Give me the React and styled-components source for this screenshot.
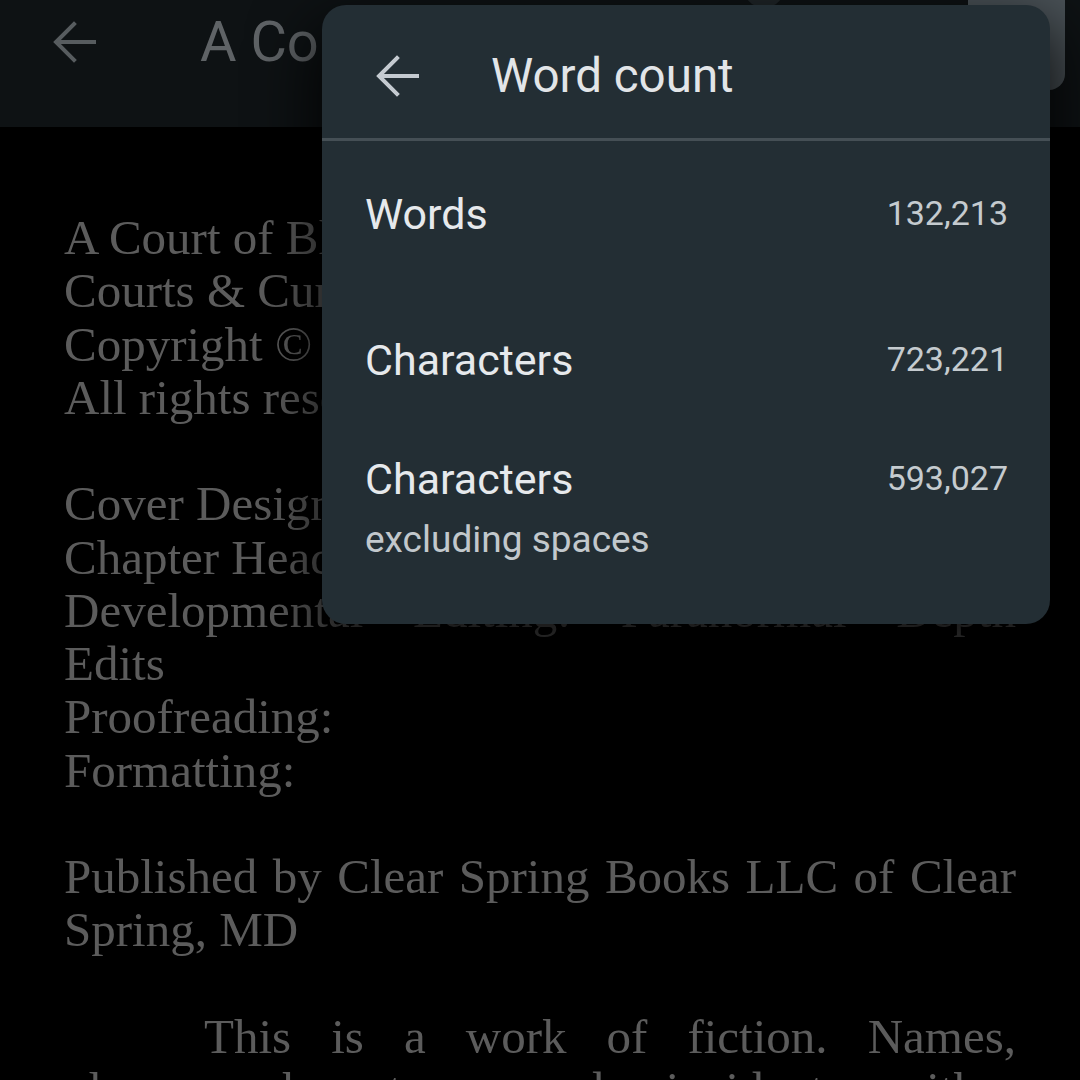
import styled, { createGlobalStyle } from 'styled-components';

const GlobalStyle = createGlobalStyle`
  html, body {
    margin: 0;
    padding: 0;
    background: #000;
  }
  body {
    font-family: Roboto, "Noto Sans", sans-serif;
  }
`;

const BackArrow = ({ size = 44, color }) => (
  <svg width={size} height={size} viewBox="0 0 44 44" fill="none">
    <path
      d="M42 22H5M22 4L4 22l18 18"
      stroke={color}
      strokeWidth="4"
      strokeLinecap="square"
    />
  </svg>
);

const stats = [
  { label: 'Words', value: '132,213', gap: 0 },
  { label: 'Characters', value: '723,221', gap: 98 },
  { label: 'Characters', sub: 'excluding spaces', value: '593,027', gap: 71 },
];

const lines = [
  { text: 'A Court of Blood and Stars' },
  { text: 'Courts & Curses, Book One' },
  { text: 'Copyright © 2023' },
  { text: 'All rights reserved.' },
  null,
  { text: 'Cover Design: Studio' },
  { text: 'Chapter Headers: Studio' },
  { text: 'Developmental Editing: Paranormal Depth', justify: true },
  { text: 'Edits' },
  { text: 'Proofreading:' },
  { text: 'Formatting:' },
  null,
  { text: 'Published by Clear Spring Books LLC of Clear', justify: true },
  { text: 'Spring, MD' },
  null,
  { text: 'This is a work of fiction. Names,', justify: true, indent: 140 },
  { text: 'places, characters, and incidents either', justify: true },
  { text: 'are the products of the author’s imagination' },
];

export default function App() {
  return (
    <>
      <GlobalStyle />
      <Screen>
        <TopBar>
          <BackArrow color="#575c5f" />
          <DocTitle>A Court of Blood and Stars</DocTitle>
          <RoundButton />
          <SquareButton />
        </TopBar>
        <Pages>
          {lines.map((line, i) =>
            line ? (
              <Line key={i} $justify={line.justify} $indent={line.indent}>
                {line.text}
              </Line>
            ) : (
              <Blank key={i} />
            )
          )}
        </Pages>

        <Dialog>
          <DialogHeader>
            <BackArrow color="#c4cad0" />
            <DialogTitle>Word count</DialogTitle>
          </DialogHeader>
          <Divider />
          <StatList>
            {stats.map((s, i) => (
              <StatRow key={i} $gap={s.gap}>
                <StatLabel>
                  <span>{s.label}</span>
                  {s.sub && <StatSub>{s.sub}</StatSub>}
                </StatLabel>
                <StatValue>{s.value}</StatValue>
              </StatRow>
            ))}
          </StatList>
        </Dialog>
      </Screen>
    </>
  );
}

const Screen = styled.div`
  position: relative;
  width: 1080px;
  height: 1080px;
  overflow: hidden;
  background: #000;
`;

const TopBar = styled.div`
  height: 127px;
  box-sizing: border-box;
  padding: 20px 15px 0 52px;
  background: #0e1214;
  display: flex;
  align-items: flex-start;
`;

const DocTitle = styled.div`
  flex: 1;
  margin-left: 104px;
  font-size: 56px;
  line-height: 44px;
  color: #5f6366;
  white-space: nowrap;
  overflow: hidden;
`;

const RoundButton = styled.div`
  width: 44px;
  height: 50px;
  margin: -62px 182px 0 0;
  border-radius: 50%;
  background: #1f2528;
`;

const SquareButton = styled.div`
  width: 97px;
  height: 110px;
  margin-top: -40px;
  border-radius: 16px;
  background: #4a5257;
`;

const Pages = styled.div`
  padding: 84px 64px 0;
  font-family: "Liberation Serif", "Times New Roman", serif;
  font-size: 49px;
  line-height: 53.27px;
  color: #5c5c5c;
`;

const Line = styled.div`
  white-space: ${(p) => (p.$justify ? 'normal' : 'nowrap')};
  text-indent: ${(p) => p.$indent || 0}px;
  text-align: ${(p) => (p.$justify ? 'justify' : 'left')};
  text-align-last: ${(p) => (p.$justify ? 'justify' : 'auto')};
`;

const Blank = styled.div`
  height: 53.27px;
`;

const Dialog = styled.div`
  position: absolute;
  top: 5px;
  left: 322px;
  width: 728px;
  border-radius: 24px;
  background: #232e34;
  box-shadow: 0 28px 60px 12px rgba(0, 0, 0, 0.75);
  overflow: hidden;
`;

const DialogHeader = styled.div`
  height: 133px;
  box-sizing: border-box;
  padding: 8px 0 0 53px;
  display: flex;
  align-items: center;
  gap: 72px;
`;

const DialogTitle = styled.div`
  font-size: 47.5px;
  color: #e2e5e8;
`;

const Divider = styled.div`
  height: 3px;
  background: #454f55;
`;

const StatList = styled.div`
  padding: 49px 42px 62px 43px;
`;

const StatRow = styled.div`
  display: flex;
  justify-content: space-between;
  align-items: flex-start;
  margin-top: ${(p) => p.$gap}px;
`;

const StatLabel = styled.div`
  display: flex;
  flex-direction: column;
  font-size: 43px;
  line-height: 48px;
  color: #e6e9ec;
`;

const StatSub = styled.span`
  margin-top: 15px;
  font-size: 37px;
  line-height: 44px;
  color: #c2c8cc;
`;

const StatValue = styled.div`
  font-size: 34px;
  line-height: 46px;
  color: #c5cbcf;
`;
